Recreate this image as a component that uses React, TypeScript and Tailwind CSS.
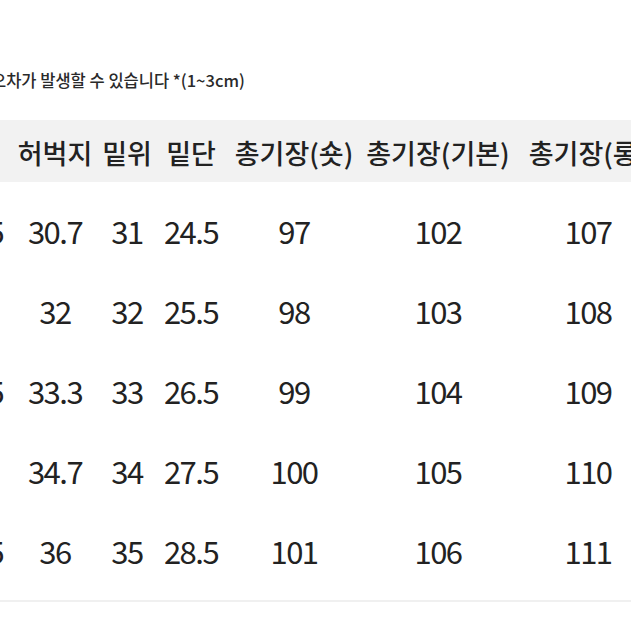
import React from "react";

const cols = ["w-[80px]", "w-[78px]", "w-[66px]", "w-[62px]", "w-[144px]", "w-[144px]", "w-[156px]"];
const headers = ["허리", "허벅지", "밑위", "밑단", "총기장(숏)", "총기장(기본)", "총기장(롱)"];
const rows = [
  ["35.5", "30.7", "31", "24.5", "97", "102", "107"],
  ["36", "32", "32", "25.5", "98", "103", "108"],
  ["36.5", "33.3", "33", "26.5", "99", "104", "109"],
  ["37", "34.7", "34", "27.5", "100", "105", "110"],
  ["37.5", "36", "35", "28.5", "101", "106", "111"],
];

export default function App() {
  return (
    <div
      className="w-[631px] h-[631px] bg-white overflow-hidden text-[#222]"
      style={{ fontFamily: '"Noto Sans CJK KR", "Noto Sans", sans-serif' }}
    >
      <div className="pt-[68px] h-[120px]">
        <p className="ml-[-9px] text-[16.5px] font-medium leading-[24px] text-[#2a2a2a] whitespace-nowrap">
          오차가 발생할 수 있습니다 *(1~3cm)
        </p>
      </div>
      <div className="ml-[-64px] w-[732px]">
        <div className="flex h-[62px] items-center bg-[#f2f2f2]">
          {headers.map((h, i) => (
            <div
              key={i}
              className={`${cols[i]} shrink-0 flex justify-center whitespace-nowrap text-[27px] font-medium leading-none pt-[2px]`}
            >
              {h}
            </div>
          ))}
        </div>
        <div className="pt-[8px]">
          {rows.map((r, ri) => (
            <div key={ri} className="flex h-[80px] items-center">
              {r.map((v, i) => (
                <div
                  key={i}
                  className={`${cols[i]} shrink-0 flex justify-center whitespace-nowrap text-[31px] tracking-[-1.5px] leading-none`}
                >
                  {v}
                </div>
              ))}
            </div>
          ))}
        </div>
        <div className="mt-[10px] h-[2px] bg-[#f0f0f0]" />
      </div>
    </div>
  );
}
